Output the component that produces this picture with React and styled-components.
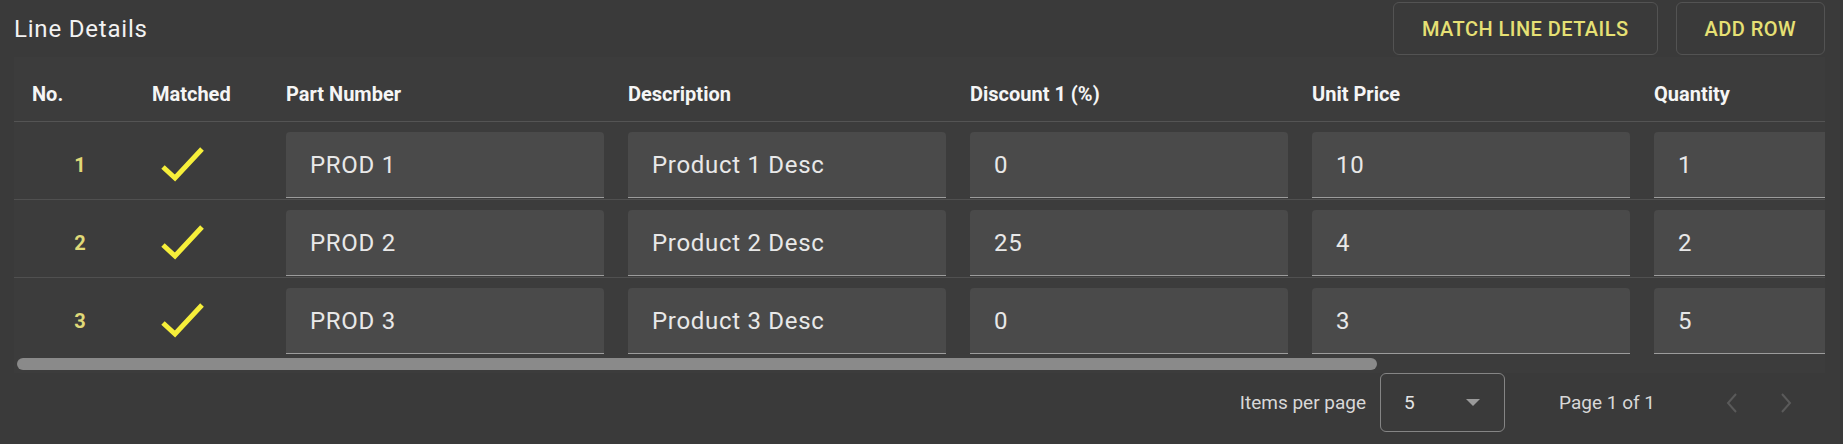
import styled, { createGlobalStyle } from 'styled-components';

const GlobalStyle = createGlobalStyle`
  body {
    margin: 0;
    background: #3a3a3a;
    font-family: Roboto, "Noto Sans", sans-serif;
  }
`

const Page = styled.div`
  padding: 0 18px 0 14px;
`

const TitleBar = styled.div`
  display: flex;
  align-items: center;
  justify-content: space-between;
  padding: 2px 0;
`

const Title = styled.h2`
  margin: 0;
  font-size: 24px;
  font-weight: 400;
  letter-spacing: 0.8px;
  color: #f2f2f2;
`

const Actions = styled.div`
  display: flex;
  gap: 18px;
`

const OutlineButton = styled.button`
  height: 53px;
  padding: 0 28px;
  background: transparent;
  border: 1px solid #535353;
  border-radius: 6px;
  color: #e6e074;
  font-family: Roboto, sans-serif;
  font-size: 20px;
  font-weight: 500;
  letter-spacing: 0.45px;
  text-transform: uppercase;
  cursor: pointer;
`

const TableBox = styled.div`
  background: #3c3c3c;
`

const ScrollArea = styled.div`
  overflow: hidden;
`

const Table = styled.div`
  width: 2404px;
`

const ScrollTrack = styled.div`
  height: 18px;
  padding: 3px;
  box-sizing: border-box;
`

const ScrollThumb = styled.div`
  height: 12px;
  border-radius: 6px;
  background: #8a8a8a;
`

const columns = '132px 140px repeat(5, 342px) 1fr'

const HeadRow = styled.div`
  display: grid;
  grid-template-columns: ${columns};
  align-items: center;
  height: 54px;
  padding-top: 10px;
  border-bottom: 1px solid #545454;
`

const HeadCell = styled.div`
  padding-left: ${p => p.$pad || 0}px;
  font-size: 20px;
  font-weight: 700;
  color: #f5f5f5;
`

const BodyRow = styled.div`
  display: grid;
  grid-template-columns: ${columns};
  align-items: center;
  padding: 10px 0 1px;
  border-bottom: 1px solid #505050;

  &:last-child {
    border-bottom: none;
  }
`

const NumCell = styled.div`
  text-align: center;
  font-size: 20px;
  font-weight: 700;
  color: #e0da78;
`

const CheckCell = styled.div`
  padding-left: 13px;
  display: flex;
  align-items: center;
`

const Field = styled.input`
  width: 318px;
  height: 66px;
  box-sizing: border-box;
  padding: 0 24px;
  background: #4a4a4a;
  border: none;
  border-bottom: 1px solid #9c9c9c;
  border-radius: 4px 4px 0 0;
  color: #e8e8e8;
  font-family: Roboto, sans-serif;
  font-size: 24px;
  letter-spacing: 0.7px;
  outline: none;
`

const Footer = styled.div`
  display: flex;
  justify-content: flex-end;
  align-items: center;
  height: 59px;
  padding-right: 12px;
  font-size: 19px;
  color: #d8d8d8;
`

const SelectBox = styled.div`
  width: 125px;
  height: 59px;
  box-sizing: border-box;
  margin-left: 14px;
  padding: 0 24px 0 23px;
  display: flex;
  align-items: center;
  justify-content: space-between;
  border: 1px solid #858585;
  border-radius: 6px;
  color: #e4e4e4;
`

const Caret = styled.span`
  width: 0;
  height: 0;
  border-left: 7.5px solid transparent;
  border-right: 7.5px solid transparent;
  border-top: 7px solid #9a9a9a;
`

const PageInfo = styled.span`
  margin: 0 50px 0 54px;
`

const NavButton = styled.button`
  width: 54px;
  height: 48px;
  display: flex;
  align-items: center;
  justify-content: center;
  background: none;
  border: none;
  padding: 0;
`

const Check = () => (
  <svg width="46" height="40" viewBox="0 0 46 40">
    <polyline points="4,22 16,33 43,4" fill="none" stroke="#f6ef3a" strokeWidth="5" />
  </svg>
)

const Chevron = ({ dir }) => (
  <svg width="14" height="20" viewBox="0 0 14 20">
    <polyline
      points={dir === 'left' ? '11,1 3,10 11,19' : '3,1 11,10 3,19'}
      fill="none"
      stroke="#5a5a5a"
      strokeWidth="2"
    />
  </svg>
)

const headers = ['Part Number', 'Description', 'Discount 1 (%)', 'Unit Price', 'Quantity']

const rows = [
  { no: 1, part: 'PROD 1', desc: 'Product 1 Desc', discount: '0', price: '10', qty: '1' },
  { no: 2, part: 'PROD 2', desc: 'Product 2 Desc', discount: '25', price: '4', qty: '2' },
  { no: 3, part: 'PROD 3', desc: 'Product 3 Desc', discount: '0', price: '3', qty: '5' },
]

// visible width / full table width
const VISIBLE = 1811
const TABLE_WIDTH = 2404

export default function App() {
  const thumbShare = (VISIBLE / TABLE_WIDTH) * 100

  return (
    <Page>
      <GlobalStyle />
      <TitleBar>
        <Title>Line Details</Title>
        <Actions>
          <OutlineButton>Match Line Details</OutlineButton>
          <OutlineButton>Add Row</OutlineButton>
        </Actions>
      </TitleBar>

      <TableBox>
        <ScrollArea>
          <Table>
            <HeadRow>
              <HeadCell $pad={18}>No.</HeadCell>
              <HeadCell $pad={6}>Matched</HeadCell>
              {headers.map(h => <HeadCell key={h}>{h}</HeadCell>)}
              <div />
            </HeadRow>
            {rows.map(r => (
              <BodyRow key={r.no}>
                <NumCell>{r.no}</NumCell>
                <CheckCell><Check /></CheckCell>
                {[r.part, r.desc, r.discount, r.price, r.qty].map((v, i) => (
                  <div key={i}><Field readOnly defaultValue={v} /></div>
                ))}
                <div />
              </BodyRow>
            ))}
          </Table>
        </ScrollArea>
        <ScrollTrack>
          <ScrollThumb style={{ width: `${thumbShare}%` }} />
        </ScrollTrack>
      </TableBox>

      <Footer>
        <span>Items per page</span>
        <SelectBox>
          <span>5</span>
          <Caret />
        </SelectBox>
        <PageInfo>Page 1 of 1</PageInfo>
        <NavButton><Chevron dir="left" /></NavButton>
        <NavButton><Chevron dir="right" /></NavButton>
      </Footer>
    </Page>
  )
}
